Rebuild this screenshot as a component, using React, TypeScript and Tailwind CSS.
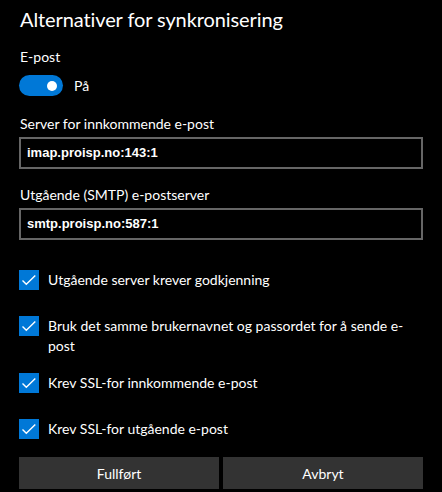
import React from "react";

const font = { fontFamily: 'Lato, "Noto Sans", sans-serif' };

function Check({ label, className = "" }: { label: string; className?: string }) {
  return (
    <div className={"flex items-start " + className}>
      <div className="w-[20px] h-[20px] bg-[#0078d7] shrink-0 flex items-center justify-center">
        <svg width="20" height="20" viewBox="0 0 20 20">
          <path d="M3.5 10.5 L7.3 14.3 L16.3 5.5" fill="none" stroke="white" strokeWidth="1.4" />
        </svg>
      </div>
      <div className="ml-[9px] text-[14px] leading-[20px] max-w-[366px]">{label}</div>
    </div>
  );
}

export default function App() {
  return (
    <div className="w-[442px] h-[492px] bg-black text-white px-[19px] overflow-hidden" style={font}>
      <div className="mt-[5px] text-[20px] leading-[28px] pl-[1px] tracking-[-0.1px]">Alternativer for synkronisering</div>
      <div className="mt-[14px] text-[14px] leading-[20px] pl-[1px]">E-post</div>
      <div className="mt-[8px] flex items-center h-[21px]">
        <div className="w-[44px] h-[21px] rounded-full bg-[#0078d7] relative">
          <div className="absolute w-[10px] h-[10px] rounded-full bg-white left-[28px] top-[5.5px]" />
        </div>
        <span className="ml-[11px] text-[14px] leading-[20px]">På</span>
      </div>
      <div className="mt-[18px] text-[14px] leading-[20px] pl-[1px]">Server for innkommende e-post</div>
      <div
        className="mt-[3px] h-[32px] border-2 border-[#666666] flex items-center px-[6px] text-[13px] font-bold"
        style={{ fontFamily: '"Liberation Sans", Arial, sans-serif' }}
      >
        imap.proisp.no:143:1
      </div>
      <div className="mt-[16px] text-[14px] leading-[20px] pl-[1px]">Utgående (SMTP) e-postserver</div>
      <div
        className="mt-[3px] h-[32px] border-2 border-[#666666] flex items-center px-[6px] text-[13px] font-bold"
        style={{ fontFamily: '"Liberation Sans", Arial, sans-serif' }}
      >
        smtp.proisp.no:587:1
      </div>
      <Check className="mt-[30px]" label="Utgående server krever godkjenning" />
      <Check className="mt-[26px]" label="Bruk det samme brukernavnet og passordet for å sende e-post" />
      <Check className="mt-[17px]" label="Krev SSL-for innkommende e-post" />
      <Check className="mt-[26px]" label="Krev SSL-for utgående e-post" />
      <div className="mt-[18px] flex gap-[4px]">
        <button className="flex-1 h-[32px] bg-[#333333] text-white text-[14px]" style={font}>Fullført</button>
        <button className="flex-1 h-[32px] bg-[#333333] text-white text-[14px]" style={font}>Avbryt</button>
      </div>
    </div>
  );
}
